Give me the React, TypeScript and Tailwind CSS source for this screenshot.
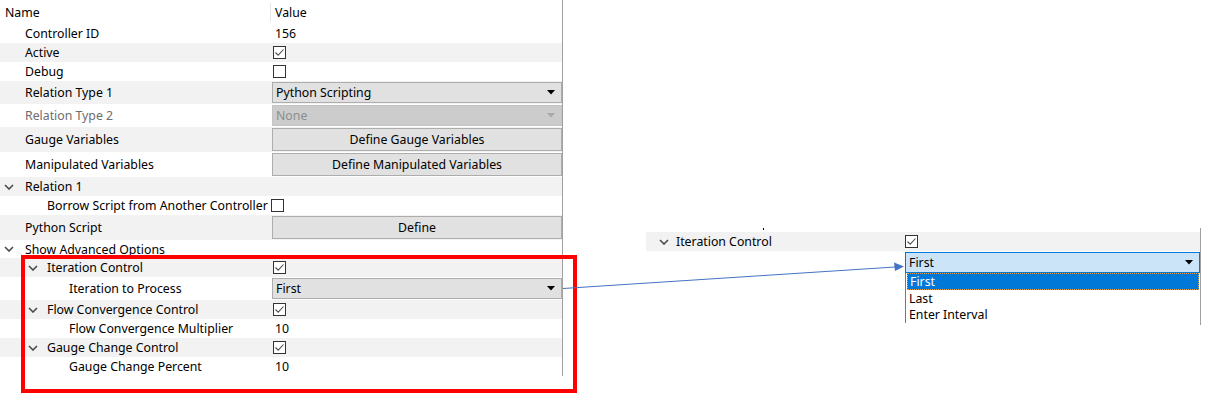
const FONT = { fontFamily: '"Noto Sans", "Open Sans", sans-serif' };

function Check({ checked }: { checked?: boolean }) {
  return (
    <span className="inline-flex h-[13px] w-[13px] items-center justify-center border border-[#333] bg-white">
      {checked && (
        <svg width="11" height="11" viewBox="0 0 11 11">
          <path d="M1.5 5.5 L4.2 8.2 L9.5 2.5" fill="none" stroke="#505050" strokeWidth="1.1" />
        </svg>
      )}
    </span>
  );
}

function Chevron() {
  return (
    <svg width="10" height="6" viewBox="0 0 10 6" className="shrink-0">
      <path d="M1 1 L5 5 L9 1" fill="none" stroke="#4a4a4a" strokeWidth="1.6" />
    </svg>
  );
}

function Caret({ color = '#000' }: { color?: string }) {
  return (
    <svg width="8" height="5" viewBox="0 0 8 5" className="shrink-0">
      <path d="M0 0 H8 L4 4.5 Z" fill={color} />
    </svg>
  );
}

function Combo({ text, disabled }: { text: string; disabled?: boolean }) {
  return (
    <div
      className={`flex h-full w-full items-center justify-between border pl-[3px] pr-[6px] ${
        disabled ? 'border-[#c4c4c4] bg-[#cccccc] text-[#8d8d8d]' : 'border-[#adadad] bg-[#e1e1e1] text-black'
      }`}
    >
      <span className="pt-[2px]">{text}</span>
      <Caret color={disabled ? '#a8a8a8' : '#000'} />
    </div>
  );
}

function Button({ text }: { text: string }) {
  return (
    <div className="flex h-full w-full items-center justify-center border border-[#adadad] bg-[#e1e1e1]">
      <span className="pt-[2px]">{text}</span>
    </div>
  );
}

// indentation per tree level, with and without an expander
const LEVEL = [
  { plain: 'pl-[25px]', expander: 'pl-[4px]', gap: 'gap-[11px]' },
  { plain: 'pl-[47px]', expander: 'pl-[28px]', gap: 'gap-[9px]' },
  { plain: 'pl-[69px]', expander: 'pl-[50px]', gap: 'gap-[9px]' },
];

type RowProps = {
  name: string;
  h: string;
  gray?: boolean;
  level?: number;
  open?: boolean;
  dim?: boolean;
  value?: React.ReactNode;
  valuePad?: string;
};

function Row({ name, h, gray, level = 0, open, dim, value, valuePad = 'pl-[5px]' }: RowProps) {
  const lv = LEVEL[level];
  return (
    <div className={`flex ${h} ${gray ? 'bg-[#f2f2f2]' : 'bg-white'}`}>
      <div className={`flex w-[270px] shrink-0 items-center ${open ? `${lv.expander} ${lv.gap}` : lv.plain}`}>
        {open && <Chevron />}
        <span className={`whitespace-nowrap pt-[2px] ${dim ? 'text-[#6d6d6d]' : 'text-black'}`}>{name}</span>
      </div>
      <div className={`flex flex-1 items-center ${valuePad}`}>
        {typeof value === 'string' ? <span className="pt-[2px]">{value}</span> : value}
      </div>
    </div>
  );
}

export default function App() {
  return (
    <div className="relative h-[406px] w-[1207px] overflow-hidden bg-white text-[12.3px] leading-none text-black" style={FONT}>
      <div className="flex">
        {/* property grid */}
        <div className="w-[563px] shrink-0 border-r border-[#a0a0a0]">
          <div className="flex h-[24px] items-center">
            <div className="w-[270px] pl-[5px] pt-[2px]">Name</div>
            <div className="h-[19px] border-l border-[#e5e5e5]" />
            <div className="pl-[4px] pt-[2px]">Value</div>
          </div>
          <Row name="Controller ID" h="h-[19px]" value="156" />
          <Row name="Active" h="h-[19px]" gray valuePad="pl-[3px]" value={<Check checked />} />
          <Row name="Debug" h="h-[19px]" valuePad="pl-[3px]" value={<Check />} />
          <Row name="Relation Type 1" h="h-[23px]" gray valuePad="pl-[2px] py-[1px]" value={<Combo text="Python Scripting" />} />
          <Row name="Relation Type 2" h="h-[23px]" dim valuePad="pl-[2px] py-[1px]" value={<Combo text="None" disabled />} />
          <Row name="Gauge Variables" h="h-[25px]" gray valuePad="pl-[2px] py-[1px]" value={<Button text="Define Gauge Variables" />} />
          <Row name="Manipulated Variables" h="h-[25px]" valuePad="pl-[2px] py-[1px]" value={<Button text="Define Manipulated Variables" />} />
          <Row name="Relation 1" h="h-[19px]" gray open />
          <Row name="Borrow Script from Another Controller" h="h-[19px]" level={1} valuePad="pl-[1px]" value={<Check />} />
          <Row name="Python Script" h="h-[25px]" gray valuePad="pl-[2px] py-[1px]" value={<Button text="Define" />} />
          <Row name="Show Advanced Options" h="h-[18px]" open />
          <Row name="Iteration Control" h="h-[19px]" gray level={1} open valuePad="pl-[3px]" value={<Check checked />} />
          <Row name="Iteration to Process" h="h-[23px]" level={2} valuePad="pl-[2px] py-[1px]" value={<Combo text="First" />} />
          <Row name="Flow Convergence Control" h="h-[19px]" gray level={1} open valuePad="pl-[3px]" value={<Check checked />} />
          <Row name="Flow Convergence Multiplier" h="h-[19px]" level={2} value="10" />
          <Row name="Gauge Change Control" h="h-[19px]" gray level={1} open valuePad="pl-[3px]" value={<Check checked />} />
          <Row name="Gauge Change Percent" h="h-[19px]" level={2} value="10" />
        </div>

        {/* zoomed fragment of the same grid with the dropdown open */}
        <div className="ml-[83px] mt-[228px] flex h-[97px] w-[555px] flex-col border-r border-[#a0a0a0]">
          <div className="h-[4px] pl-[117px]">
            <div className="h-[2px] w-[1px] bg-black" />
          </div>
          <div className="flex h-[19px] bg-[#f2f2f2]">
            <div className="flex w-[257px] shrink-0 items-center gap-[7px] pl-[13px]">
              <Chevron />
              <span className="pt-[2px]">Iteration Control</span>
            </div>
            <div className="flex items-center pl-[2px]">
              <Check checked />
            </div>
          </div>
          <div className="ml-[259px] mt-[1px] flex h-[21px] items-center justify-between border border-[#0078d7] bg-[#cce4f7] pl-[3px] pr-[6px]">
            <span className="pt-[2px]">First</span>
            <Caret />
          </div>
          <div className="ml-[259px] flex flex-col border-l border-[#7a7a7a] bg-white">
            <div className="mx-[1px] flex h-[17px] items-center border border-dotted border-[#e0a050] bg-[#0078d7] pl-[2px] text-white">
              <span className="pt-[2px]">First</span>
            </div>
            <div className="flex h-[16px] items-center pl-[3px]">
              <span className="pt-[2px]">Last</span>
            </div>
            <div className="flex h-[17px] items-center pl-[3px]">
              <span className="pt-[2px]">Enter Interval</span>
            </div>
          </div>
        </div>
      </div>

      {/* annotation overlays */}
      <div className="pointer-events-none absolute left-[21px] top-[255px] h-[138px] w-[556px] border-4 border-[#ff0000]" />
      <svg className="pointer-events-none absolute left-0 top-0" width="1207" height="406">
        <line x1="563" y1="288.5" x2="895" y2="267" stroke="#4472c4" strokeWidth="1" />
        <path d="M904 266.5 L894 262.5 L895 271 Z" fill="#4472c4" />
      </svg>
    </div>
  );
}
